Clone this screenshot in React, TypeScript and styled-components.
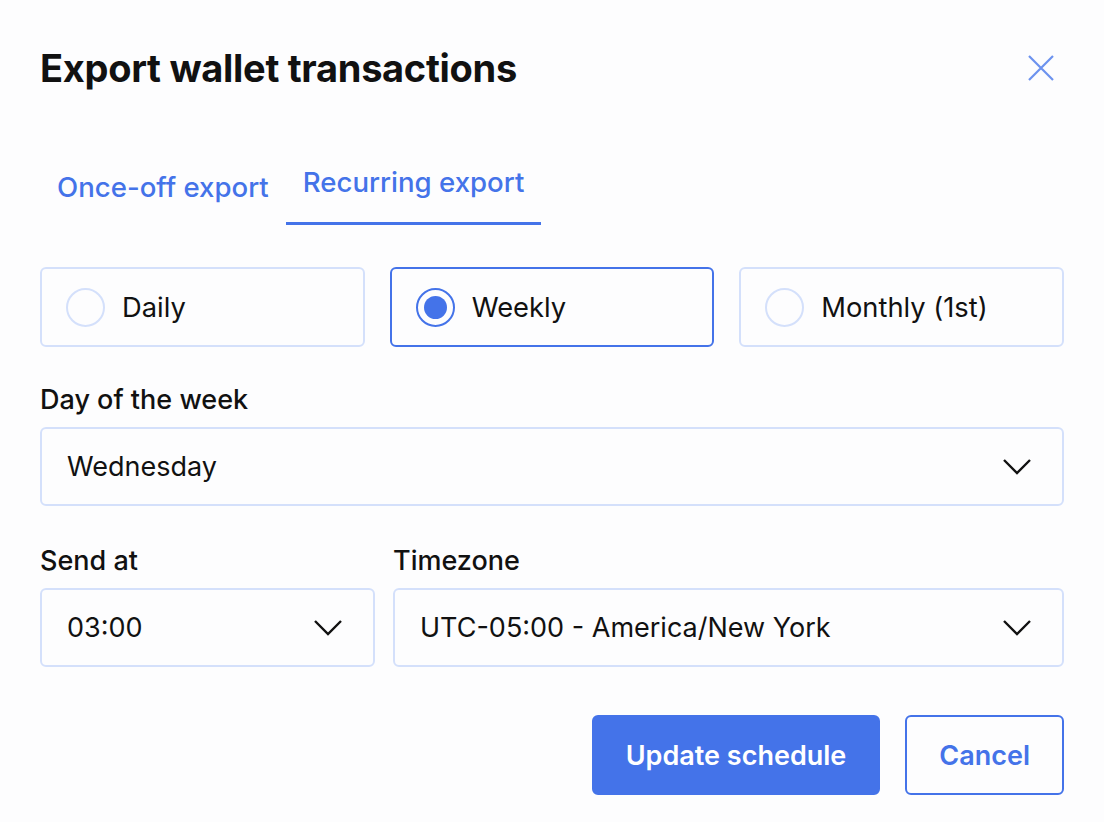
import { useState } from "react";
import styled, { createGlobalStyle } from "styled-components";

const BLUE = "#4473e9";
const SOFT = "#d4e0fb";

const GlobalStyle = createGlobalStyle`
  html, body {
    margin: 0;
    padding: 0;
    background: #fdfdfe;
    font-family: Inter, "Noto Sans", sans-serif;
    color: #111;
  }
  * { box-sizing: border-box; }
`;

const Dialog = styled.div`
  width: 1104px;
  height: 822px;
  padding: 44px 40px 0 40px;
  display: flex;
  flex-direction: column;
`;

const Header = styled.div`
  display: flex;
  align-items: center;
  justify-content: space-between;
`;

const Title = styled.h1`
  margin: 0;
  font-size: 38px;
  font-weight: 700;
  letter-spacing: -0.3px;
  line-height: 48px;
`;

const CloseButton = styled.button`
  border: none;
  background: none;
  padding: 0;
  width: 34px;
  height: 34px;
  margin-right: 6px;
  display: flex;
  align-items: center;
  justify-content: center;
  cursor: pointer;
`;

const Tabs = styled.div`
  display: flex;
  margin-top: 74px;
`;

const Tab = styled.button<{ $active?: boolean }>`
  border: none;
  background: none;
  font-family: inherit;
  font-size: 27.6px;
  line-height: 33px;
  font-weight: 500;
  color: ${BLUE};
  padding: ${(p) => (p.$active ? "0 17px 23px" : "5px 17px 18px")};
  border-bottom: 3px solid ${(p) => (p.$active ? BLUE : "transparent")};
  cursor: pointer;
`;

const Frequencies = styled.div`
  display: grid;
  grid-template-columns: repeat(3, 1fr);
  gap: 25px;
  margin-top: 42px;
`;

const Option = styled.label<{ $checked?: boolean }>`
  height: 80px;
  display: flex;
  align-items: center;
  gap: 17px;
  padding: 0 24px;
  border: 2px solid ${(p) => (p.$checked ? BLUE : SOFT)};
  border-radius: 6px;
  font-size: 27.3px;
  cursor: pointer;
`;

const Radio = styled.span<{ $checked?: boolean }>`
  width: 39px;
  height: 39px;
  border-radius: 50%;
  border: 2px solid ${(p) => (p.$checked ? BLUE : SOFT)};
  display: flex;
  align-items: center;
  justify-content: center;
  &::after {
    content: "";
    width: 23px;
    height: 23px;
    border-radius: 50%;
    background: ${BLUE};
    display: ${(p) => (p.$checked ? "block" : "none")};
  }
`;

const Field = styled.div`
  display: flex;
  flex-direction: column;
  gap: 12px;
`;

const Label = styled.div`
  font-size: 27px;
  font-weight: 500;
  line-height: 30px;
`;

const Select = styled.div`
  height: 79px;
  display: flex;
  align-items: center;
  justify-content: space-between;
  padding: 0 30px 0 25px;
  border: 2px solid ${SOFT};
  border-radius: 6px;
  font-size: 27px;
`;

const FieldStack = styled.div`
  margin-top: 38px;
`;

const Row = styled.div`
  display: grid;
  grid-template-columns: 335px 1fr;
  gap: 18px;
  margin-top: 40px;
`;

const Actions = styled.div`
  display: flex;
  justify-content: flex-end;
  gap: 25px;
  margin-top: 48px;
`;

const Button = styled.button<{ $primary?: boolean }>`
  height: 80px;
  padding: 0 32px;
  border-radius: 6px;
  font-family: inherit;
  font-size: 27px;
  font-weight: 600;
  border: 2px solid ${BLUE};
  background: ${(p) => (p.$primary ? BLUE : "transparent")};
  color: ${(p) => (p.$primary ? "#fff" : BLUE)};
  cursor: pointer;
`;

const Chevron = () => (
  <svg width="30" height="18" viewBox="0 0 30 18" fill="none">
    <path d="M2 2l13 13L28 2" stroke="#111" strokeWidth="2.4" />
  </svg>
);

const frequencies = ["Daily", "Weekly", "Monthly (1st)"];

function App() {
  const [frequency, setFrequency] = useState("Weekly");
  const [tab, setTab] = useState("recurring");

  return (
    <Dialog>
      <GlobalStyle />
      <Header>
        <Title>Export wallet transactions</Title>
        <CloseButton aria-label="Close">
          <svg width="28" height="28" viewBox="0 0 28 28" fill="none">
            <path d="M2 2l24 24M26 2L2 26" stroke="#6c92ef" strokeWidth="2.2" />
          </svg>
        </CloseButton>
      </Header>

      <Tabs>
        <Tab $active={tab === "once"} onClick={() => setTab("once")}>
          Once-off export
        </Tab>
        <Tab $active={tab === "recurring"} onClick={() => setTab("recurring")}>
          Recurring export
        </Tab>
      </Tabs>

      <Frequencies>
        {frequencies.map((f) => (
          <Option key={f} $checked={frequency === f} onClick={() => setFrequency(f)}>
            <Radio $checked={frequency === f} />
            {f}
          </Option>
        ))}
      </Frequencies>

      <FieldStack>
        <Field>
          <Label>Day of the week</Label>
          <Select>
            Wednesday
            <Chevron />
          </Select>
        </Field>
      </FieldStack>

      <Row>
        <Field>
          <Label>Send at</Label>
          <Select>
            03:00
            <Chevron />
          </Select>
        </Field>
        <Field>
          <Label>Timezone</Label>
          <Select>
            UTC-05:00 - America/New York
            <Chevron />
          </Select>
        </Field>
      </Row>

      <Actions>
        <Button $primary>Update schedule</Button>
        <Button>Cancel</Button>
      </Actions>
    </Dialog>
  );
}

export default App;
